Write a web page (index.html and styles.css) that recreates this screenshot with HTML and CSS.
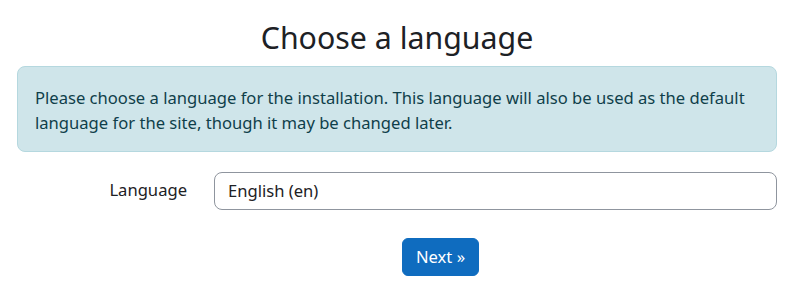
FILE: index.html
```html
<!DOCTYPE html>
<html lang="en">
<head>
<meta charset="utf-8">
<title>Installation</title>
<link rel="stylesheet" href="styles.css">
</head>
<body>
<div class="page">
  <h2 class="title">Choose a language</h2>
  <div class="alert">Please choose a language for the installation. This language will also be used as the default language for the site, though it may be changed later.</div>
  <form class="form">
    <div class="row">
      <label class="label" for="lang">Language</label>
      <div class="select" id="lang">English (en)</div>
    </div>
    <div class="buttons">
      <button type="button" class="btn">Next »</button>
    </div>
  </form>
</div>
</body>
</html>
```

FILE: styles.css
```css
html, body {
  margin: 0;
  padding: 0;
  background: #ffffff;
}
body {
  font-family: "Noto Sans", "Open Sans", sans-serif;
  font-size: 16.6px;
  line-height: 1.5;
  color: #1d2125;
}
.page {
  width: 760px;
  margin-left: 17px;
}
.title {
  margin: 20px 0 10px;
  text-align: center;
  font-size: 30.3px;
  font-weight: 400;
  line-height: 36px;
}
.alert {
  background: #cfe5ea;
  border: 1px solid #b5d8df;
  border-radius: 8px;
  color: #0f3f4a;
  padding: 18px 17px 16px;
  line-height: 25px;
}
.form {
  margin-top: 20px;
}
.row {
  display: flex;
  align-items: flex-start;
}
.label {
  width: 170px;
  text-align: right;
  padding-top: 6px;
  box-sizing: border-box;
  color: #1d2125;
}
.select {
  margin-left: 27px;
  flex: 1;
  height: 38px;
  box-sizing: border-box;
  border: 1px solid #8f959e;
  border-radius: 8px;
  padding: 6px 13px;
  color: #1d2125;
}
.buttons {
  display: flex;
  justify-content: center;
  margin-top: 28px;
  padding-left: 87px;
}
.btn {
  font-family: inherit;
  font-size: 16.6px;
  line-height: 24px;
  background: #0f6cbf;
  color: #ffffff;
  border: 1px solid #0f6cbf;
  border-radius: 6px;
  padding: 6px 13px;
  height: 38px;
}
```
